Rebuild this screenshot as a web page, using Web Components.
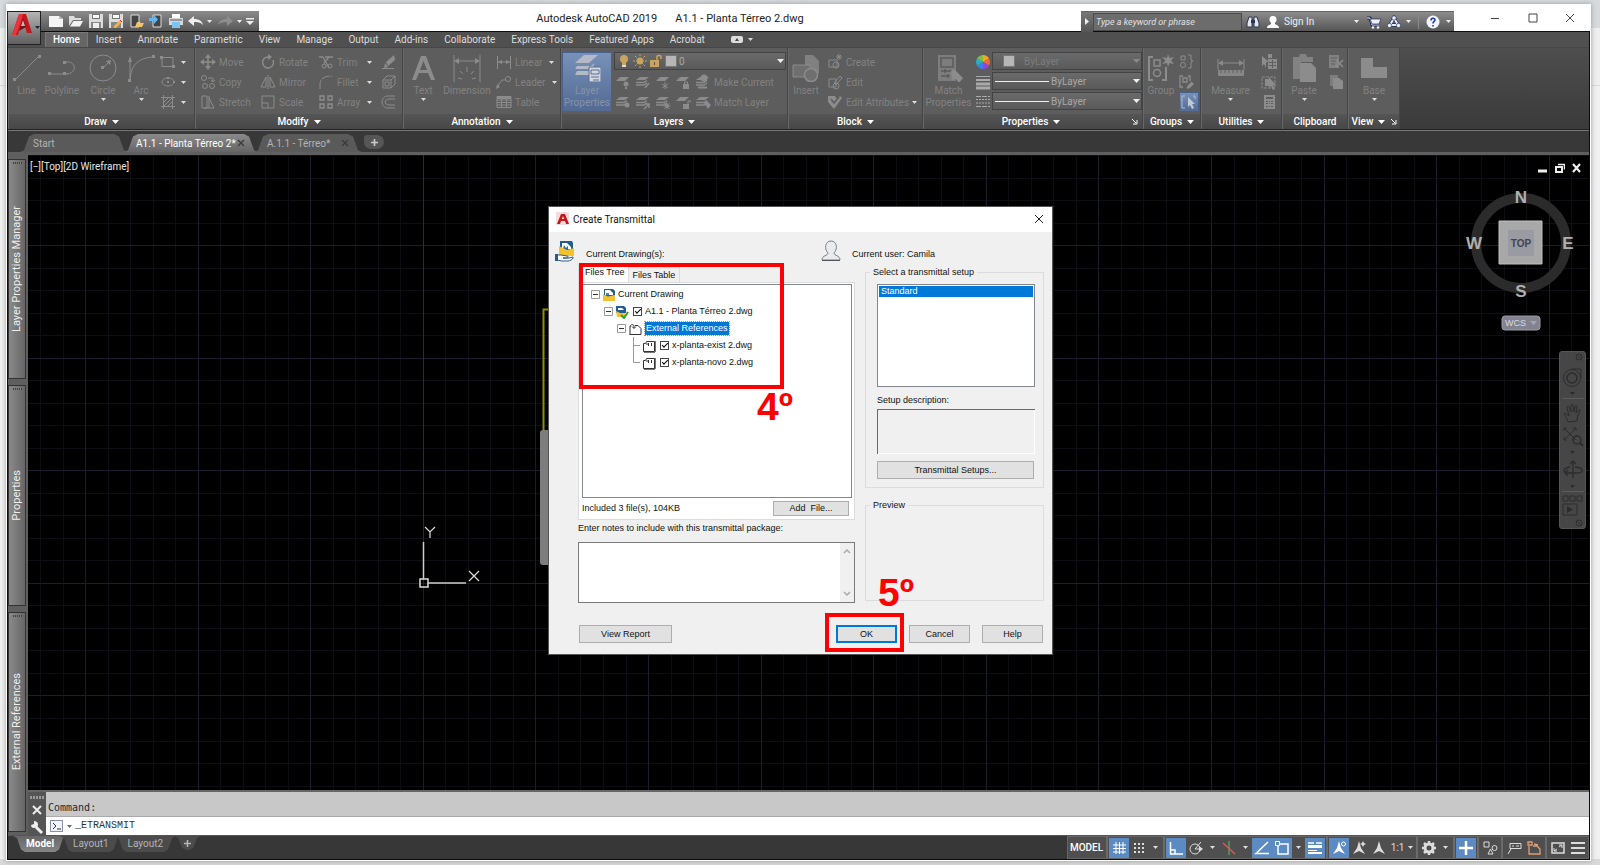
<!DOCTYPE html>
<html lang="en">
<head>
<meta charset="utf-8">
<title>Autodesk AutoCAD 2019 - A1.1 - Planta Térreo 2.dwg</title>
<style>
html,body{height:100%}
body{margin:0;padding:4px 9px 5px 6px;box-sizing:border-box;font-family:Roboto,"Open Sans",sans-serif;font-size:10px;
background:linear-gradient(#d6dadd 0 28px,#efefef 28px 85px,#d9d9d9 85px 86px,#f0f0f0 86px calc(100% - 6px),#d9d9d9 calc(100% - 6px))}
</style>
</head>
<body>
<cad-window></cad-window>
<script>
const s = (d, extra = '') => `<path d="${d}" fill="none" stroke="currentColor" ${extra}/>`;
const f = (d, extra = '') => `<path d="${d}" fill="currentColor" ${extra}/>`;
const layers = f('M5 3h9l-4 3H1z') + s('M1 8.500h8l3-2M1 11h8l3-2', 'stroke-width="1.500"');
const oneLayer = f('M5 3h9l-4 4H1z');
const annoA = f('M8 1l2 7 4 6-6-3-6 3 4-6z');
/* name: [width, height, markup] */
const ICONS = {
  arrow: [7, 4, f('M0 0h7L3.500 4z')],
  arrowsm: [5, 3, f('M0 0h5L2.500 3z')],
  launcher: [7, 7, s('M1 1l4 4M6 2v4H2')],
  logo: [22, 24, `<path d="M1 23L8 2h7l6 19h-5l-2-6H9l-2 8z" fill="#c4161c"/><path d="M8 2h4l-2 8-5 13H1z" fill="#e8343a"/><path d="M9 15l3-9 3 9-7 4z" fill="#7d1015"/><path d="M10 14l2-6 2 6z" fill="#bbb"/>`],
  logosm: [14, 14, `<path fill="#f6dcdc" d="M0 0h13v13H0z"/><path d="M1 12L5 2h4l4 10h-3l-1-3H5l-1 3z" fill="#c4161c"/><path d="M6 7l1-3 1 3z" fill="#fff"/>`],
  new: [16, 14, `<path fill="#f4f4f4" d="M1 2h10l4 3v8H1z"/><path fill="#bbb" d="M11 2v3h4z"/>`],
  open: [16, 14, `<path fill="#ddd" d="M1 12V2h5l1 2h6v2H5z"/><path fill="#f2f2f2" d="M2 12.500L5.500 7H15l-3 5.500z"/>`],
  save: [16, 14, `<path fill="#dcdcdc" d="M1 0h14v14H1z"/><path fill="#777" d="M4 0h8v5H4z"/><path fill="#fff" d="M5 1h6v3H5z"/><path fill="#888" d="M3 8h10v6H3z"/><path fill="#eee" d="M5 9h6v5H5z"/>`],
  saveas: [16, 14, `<path fill="#dcdcdc" d="M1 0h14v14H1z"/><path fill="#777" d="M4 0h8v5H4z"/><path fill="#fff" d="M5 1h6v3H5z"/><path fill="#888" d="M3 8h10v6H3z"/><path d="M6 12l6-6 2 2-6 6H6z" fill="#f0b44a"/><path d="M12 6l2 2" stroke="#d33"/>`],
  webopen: [16, 14, `<path d="M3 1h8v12H3z" fill="#444" stroke="#ddd"/><path fill="#f0c46a" d="M7 13l2-5h3l1 1h3l-2 4z"/>`],
  websave: [16, 14, `<path d="M5 1h8v12H5z" fill="#444" stroke="#ddd"/><path fill="#63b7f0" d="M1 4h5V1l4 4.500L6 10V7H1z"/>`],
  print: [16, 14, `<path fill="#fff" d="M4 0h8v4H4z"/><path fill="#d8d8d8" d="M1 4h14v7H1z"/><path fill="#7cc4f5" d="M4 8h8v6H4z"/><path stroke="#555" d="M2 6h12"/>`],
  undo: [15, 12, `<path fill="currentColor" d="M0 6l6-5v3c5 0 8 2 9 6-3-3-5-3-9-3v4z"/>`],
  redo: [15, 12, `<path fill="currentColor" d="M15 6L9 1v3C4 4 1 6 0 10c3-3 5-3 9-3v4z"/>`],
  custom: [8, 7, f('M0 0h8v1.500H0zM0 3h8L4 7z')],
  play: [5, 7, f('M0 0l4 3.500L0 7z')],
  binoc: [14, 14, `<path fill="#e4e8ee" stroke="#2b3350" d="M3 2h3v10H1V8zM11 2H8v10h5V8z"/><path fill="#2b3350" d="M5 5h4v3H5z"/>`],
  user: [14, 14, `<circle cx="7" cy="4.500" r="3.500" fill="#fff"/><path fill="#fff" d="M1 13c0-3 3-3 4-4V7h4v2c1 1 4 1 4 4z"/>`],
  cart: [14, 14, `<path fill="none" stroke="#1c2850" stroke-width="3" d="M0 3h3l2 7h7"/><path fill="none" stroke="#eef" d="M0 3h3l2 7h7"/><path fill="#eef" stroke="#1c2850" stroke-width=".7" d="M3 4h11l-2 5H5z"/><circle cx="6" cy="12.500" r="1.300" fill="#eef"/><circle cx="11" cy="12.500" r="1.300" fill="#eef"/>`],
  a360: [14, 14, `<path fill="none" stroke="#26335c" stroke-width="3.500" d="M7 3l4 7H3z"/><path fill="none" stroke="#eef" stroke-width="2" d="M7 3l4 7H3z"/><g fill="#eef" stroke="#26335c" stroke-width=".7"><circle cx="7" cy="3" r="2.200"/><circle cx="2.500" cy="10.500" r="2.200"/><circle cx="11.500" cy="10.500" r="2.200"/></g>`],
  help: [14, 14, `<circle cx="7" cy="7" r="6.500" fill="#f2f4fa"/><path d="M5 5.500c0-3 4-3 4-.5C9 6.500 7 6.500 7 8.500M7 10v1.500" fill="none" stroke="#1f3f9c" stroke-width="1.600"/>`],
  min: [10, 10, s('M1 5.500h8')], max: [10, 10, s('M1 1h8v8H1z')], close: [10, 10, s('M1 1l8 8M9 1l-8 8')], closeb: [10, 10, s('M1 1l8 8M9 1l-8 8', 'stroke-width="2"')],
  ribbonmin: [12, 8, `<rect width="12" height="7" rx="2" fill="#ddd"/><path d="M4 5h4L6 2z" fill="#444"/>`],
  line: [28, 28, s('M2 26L26 2') + f('M0 24h3v3H0zM25 1h3v3h-3z')],
  polyline: [28, 28, s('M2 20h15M18 8c11-1 11 12 0 12') + f('M0 18h3v3H0zM15 18h3v3h-3zM15 7h3v3h-3z')],
  circle: [28, 28, `<circle cx="14" cy="14" r="13" fill="none" stroke="currentColor"/>` + s('M14 14l6-6') + f('M12 12h3v3h-3zM17 7l5-1-1 5z')],
  arc: [28, 28, s('M3 26V6M3 26C4 10 12 4 26 3') + f('M1 8l2-6 2 6zM1 25h3v3H1zM25 1h3v3h-3z')],
  rect: [16, 16, s('M2 3.500h11v9H2z') + f('M0 2h3v3H0zM12 11h3v3h-3z')],
  ellipse: [16, 16, `<ellipse cx="8" cy="8" rx="6" ry="4" fill="none" stroke="currentColor"/>` + f('M7 3h2v2H7zM7 7h2v2H7zM13 7h2v2h-2z')],
  hatch: [16, 16, s('M3.500 1v14M12.500 1v14M1 3.500h14M1 12.500h14M4 8l4-4M4 12l8-8M8 12l4-4')],
  move: [16, 16, s('M8 2v12M2 8h12', 'stroke-width="1.500"') + f('M8 0l3 4H5zM8 16l3-4H5zM0 8l4-3v6zM16 8l-4-3v6z')],
  copy: [16, 16, `<g fill="none" stroke="currentColor"><circle cx="4" cy="4" r="2.500"/><circle cx="5" cy="12" r="2.500"/><circle cx="12" cy="12" r="2.500"/><path d="M8 4h5v4M11 6l2 2 2-2"/></g>`],
  stretch: [16, 16, s('M2 2h5v12H2zM9 2v12M9 4l5 10H4')],
  rotate: [16, 16, s('M9 3a5.500 5.500 0 1 0 4 3', 'stroke-width="1.500"') + f('M8 0v6l4-3z')],
  mirror: [16, 16, s('M6 3v10H1zM10 3v10h5zM8 1v14')],
  scale: [16, 16, s('M2 2h12v12H2zM2 9h6v5')],
  trim: [16, 16, s('M1 3h4M7 3h8M5 3l6 11M11 3L6 9', 'stroke-width="1.300"') + `<circle cx="6" cy="12" r="2" fill="none" stroke="currentColor"/><circle cx="12" cy="12" r="2" fill="none" stroke="currentColor"/>`],
  fillet: [16, 16, s('M2 15V10C2 5 6 2 14 2', 'stroke-dasharray="9 1"')],
  array: [16, 16, s('M2 2h4v4H2zM10 2h4v4h-4zM2 10h4v4H2zM10 10h4v4h-4z', 'stroke-width="1.400"')],
  erase: [16, 16, f('M5 8l8-7 1 5-7 6zM4 9l3 4-4 1z') + s('M1 14.500h12')],
  explode: [16, 16, s('M2 6h8v8H2zM2 6l4-4h8v8l-4 4M10 6l4-4M4 8h4v4H4z')],
  offset: [16, 16, s('M14 2H7C-1 2-1 14 7 14h7M14 5H8C3 5 3 11 8 11h6')],
  text: [28, 28, f('M3 26L12 2h5l9 24h-4l-3-7H10l-3 7zM11 16h7L14.500 7z', 'fill-rule="evenodd"')],
  dim: [28, 28, s('M1 1v27M27 1v27M2 7h24M14 13v5M7 17l3 3M21 17l-3 3M5 24l4 1M23 24l-4 1') + f('M1 7l5-3v6zM27 7l-5-3v6z')],
  linear: [16, 16, s('M1.500 2v13M14.500 2v13M2 8h12') + f('M2 8l4-2v4zM14 8l-4-2v4z')],
  leader: [16, 16, s('M1 13l5-7h4') + `<circle cx="12" cy="5" r="2.500" fill="none" stroke="currentColor"/>` + f('M0 15l1-5 3 3z')],
  table: [16, 16, s('M1 2.500h14v11H1zM1 6h14M1 8.500h14M1 11h14M5.500 5v9M10.500 5v9') + f('M1 2h14v3H1z')],
  layerprops: [28, 28, `<path fill="#b3bac5" d="M11 1h14l-9 8H2zM4 12h14l3-3-1 6H2zM4 17h12v4H2z"/><path fill="#d3d8e0" stroke="#5a6d91" d="M16 13h12v15H16z"/><path stroke="#5a6d91" fill="none" d="M18 16h8v4h-8zM18 23h8M20 26h6"/>`],
  bulb: [14, 14, `<circle cx="7" cy="5" r="4" fill="#c9a45e"/><path fill="#c9a45e" d="M5 8h4v3H5z"/><path fill="#ddd" d="M5 11h4v2H5z"/>`],
  sun: [14, 14, `<circle cx="7" cy="7" r="3.500" fill="#c9a45e"/><path stroke="#c9a45e" d="M7 0v2M7 12v2M0 7h2M12 7h2M2 2l1.500 1.500M12 2l-1.500 1.500M2 12l1.500-1.500M12 12l-1.500-1.500"/>`],
  lock: [14, 14, `<path fill="#c9a45e" d="M1 6h9v7H1z"/><path fill="none" stroke="#c9a45e" stroke-width="1.500" d="M8 6V3c0-2 4-2 4 0v2"/><path fill="#555" d="M5 8h1v3H5z"/>`],
  ly1: [16, 16, oneLayer + `<circle cx="11" cy="10" r="2.500" fill="currentColor"/>` + f('M10 13h2v2h-2z')],
  ly2: [16, 16, layers + s('M10 14l4-5', 'stroke-width="1.500"')],
  ly3: [16, 16, oneLayer + s('M10 8v7M7 10l6 4M13 10l-6 4')],
  ly4: [16, 16, oneLayer + f('M8 10h6v5H8z') + s('M9.500 10V8h3v2')],
  ly5: [16, 16, layers + `<circle cx="9" cy="4" r="3.500" fill="currentColor"/>` + s('M3 13.500h9', 'stroke-width="2"')],
  ly6: [16, 16, layers + `<circle cx="12" cy="11" r="2.500" fill="currentColor"/>`],
  ly7: [16, 16, layers + s('M9 15l5-5M14 14v-4h-4', 'stroke-width="1.500"')],
  ly8: [16, 16, layers + `<circle cx="12" cy="12" r="2" fill="currentColor"/>` + s('M12 8v8M8 12h8M9 9l6 6M15 9l-6 6', 'stroke-width=".7"')],
  ly9: [16, 16, oneLayer + f('M8 10h6v5H8z') + s('M13 10V7h3v2')],
  ly10: [16, 16, layers + f('M9 9l3-2 4 4-3 4z')],
  insert: [28, 28, f('M13 1h8l6 6v12H13z', 'opacity=".75"') + `<path d="M1 11h17v12H1z" fill="#6f6f6f" stroke="currentColor"/><circle cx="19" cy="21" r="6.500" fill="#6f6f6f" stroke="currentColor" stroke-width="1.500"/>`],
  bcreate: [16, 16, s('M2 6h8v7H2zM9 3h6M12 0v6M10 1l4 4M14 1l-4 4') + `<circle cx="9" cy="11" r="3" fill="none" stroke="currentColor"/>`],
  bedit: [16, 16, s('M2 5h7v8H2zM7 9l6-7 2 2-6 7z') + `<circle cx="9" cy="12" r="3" fill="none" stroke="currentColor"/>`],
  battr: [16, 16, f('M1 2h7l2 3 3-3 2 2-8 11L1 8z') + `<path d="M4 5l3 4 5-6" stroke="#5e5e5e" fill="none" stroke-width="1.500"/>`],
  match: [28, 28, f('M3 1h18v26H3z', 'opacity=".7"') + `<path d="M6 4h12v9H6zM6 17h12M6 22h9M10 15v4M13 20v4" fill="none" stroke="#5b5b5b" stroke-width="1.500"/>` + f('M16 17l3-2 9 9-4 5-3-4-4 1z')],
  wheel: [16, 16, `<path fill="#f5a623" d="M8 8V1a7 7 0 0 1 6 3.500z"/><path fill="#f0683a" d="M8 8l6-3.500a7 7 0 0 1 0 7z"/><path fill="#8e44ec" d="M8 8l6 3.500A7 7 0 0 1 8 15z"/><path fill="#3f7fe8" d="M8 8v7a7 7 0 0 1-6-3.500z"/><path fill="#25b0c5" d="M8 8l-6 3.500a7 7 0 0 1 0-7z"/><path fill="#77c043" d="M8 8L2 4.500A7 7 0 0 1 8 1z"/>`],
  weights: [16, 16, `<path stroke="#aaa" d="M1 2.500h14"/><path stroke="#aaa" stroke-width="2" d="M1 6h14"/><path stroke="#aaa" stroke-width="3" d="M1 10h14M1 14h14"/>`],
  types: [16, 16, `<path stroke="#aaa" stroke-dasharray="5 1" d="M1 2.500h14M1 12.500h14"/><path stroke="#aaa" stroke-dasharray="2 1" d="M1 5.500h14M1 9h14"/>`],
  group: [28, 28, s('M6 3H2v23h4M15 26h4V13', 'stroke-width="2"') + s('M7 6h6v6H7z', 'stroke-width="1.500"') + `<circle cx="10" cy="19" r="3.500" fill="none" stroke="currentColor" stroke-width="1.500"/>` + f('M21 0l1.500 4L27 3l-3 3.500 3 3.500-4.500-1L21 13l-1-4-5 1 3.500-3.500L15 3l5 1z')],
  g2: [16, 16, s('M2 2h4v4H2zM9 1h3v5l2 1-2 1v6H9') + `<circle cx="4" cy="11" r="2.500" fill="none" stroke="currentColor"/>`],
  g3: [16, 16, s('M4 2H1v11h3M9 2h2v5M4 4h4v4H4zM8 14l5-6', 'stroke-width="1.300"') + f('M8 15l1-4 4-3 2 2-4 4z')],
  g4: [16, 16, `<path fill="none" stroke="#aebbd2" d="M4 2H1v12h3M12 2h2v3"/><path fill="#bfc9da" d="M7 3v10l2-2 2 4 2-1-2-4h3z"/>`],
  measure: [28, 28, s('M1 5v11M27 5v11M2 9h24') + f('M1 9l5-3v6zM27 9l-5-3v6zM1 16h26v6H1z', 'opacity=".9"') + `<path d="M4 16v3M8 16v3M12 16v3M16 16v3M20 16v3M24 16v3" stroke="#5e5e5e"/>`],
  u1: [16, 16, f('M7 5h9v10H7zM1 2v10l2-2 2 4V8h3zM7 0h4v4H7z') + `<path stroke="#5e5e5e" d="M8 8.500h7M8 11.500h7M11.500 6v8"/>`],
  u2: [16, 16, s('M1 3h13v11H1z', 'stroke-dasharray="3 1"') + f('M4 5h4v7H4zM8 3v11l2-2 2 4 2-1-2-4h3z')],
  u3: [16, 16, f('M3 1h11v14H3z') + `<path fill="#5e5e5e" d="M5 3h7v2H5zM5 7h2v1H5zM8 7h1v1H8zM10 7h2v1h-2zM5 9h2v1H5zM8 9h1v1H8zM10 9h2v1h-2zM5 12h2v1H5zM8 12h1v1H8zM10 12h2v1h-2z"/>`],
  paste: [28, 28, f('M3 3h6l1-3h6l1 3h6v5H11v17H3z', 'opacity=".8"') + f('M10 9h11l5 5v14H10z')],
  c1: [16, 16, f('M1 1h10v13H1z', 'opacity=".8"') + `<path d="M3 4h6M3 7h6M3 10h4" stroke="#5e5e5e"/>` + s('M8 6l7 7M15 6l-7 7', 'stroke-width="1.500"')],
  c2: [16, 16, f('M2 1h8v11H2z', 'opacity=".7"') + f('M5 4h6l4 3v8H5z')],
  base: [28, 28, f('M1 4h12v9h14v11H1z')],
  plus: [9, 9, s('M4.500 1v7M1 4.500h7', 'stroke-width="1.600"')],
  tabx: [8, 8, s('M1 1l6 6M7 1L1 7', 'stroke-width="1.300"')],
  vmin: [10, 10, s('M0 8h9', 'stroke-width="3"')],
  vrest: [10, 10, s('M1 4h6v5H1z', 'stroke-width="2"') + s('M3 1.500h6.500v5', 'stroke-width="1.500"')],
  vclose: [10, 10, s('M1 1l7 8M8 1l-7 8', 'stroke-width="2.200"')],
  wrench: [14, 14, s('M6 6l6 6', 'stroke-width="3"') + f('M1 4l3-1V0c4 0 5 4 3 6-3 2-6 1-6-2z')],
  prompt: [14, 14, `<rect x=".5" y="1.500" width="12" height="11" fill="#f1f3fa" stroke="#8a90a8"/><path d="M3 4l3 3-3 3M7 10h4" fill="none" stroke="#333"/>`],
  folder: [20, 22, `<path fill="#1f5e8e" d="M5 1h12l1 2v10H5z"/><path fill="#fff" d="M7 3h5l4 4v2H7z"/><path fill="#2b6ea5" d="M9 5l2 3 2-2v3H8z"/><path fill="#f2c230" d="M4 6l8 4 7-2v8H4z"/><path fill="#fff" stroke="#2b5c88" d="M2 15h4l6 1c2 0 1 2 0 2H8h6l4-1c1 1-2 4-5 4H7l-5-1z"/><path fill="#2b5c88" d="M0 14h3v7H0z"/>`],
  person: [20, 22, `<path fill="#e8ebf0" stroke="#7b8088" d="M1 20c0-5 6-4 6-7C3 9 4 1 10 1s7 8 3 12c0 3 6 2 6 7z"/><path stroke="#555" d="M1 20.500h18"/>`],
  tdraw: [14, 14, `<path fill="#235d92" d="M2 1h9l2 2v6H2z"/><path fill="#fff" d="M3 2h5l3 3v2H3z"/><path fill="#4a86b8" d="M4 5h3v2H4z"/><path fill="#f2c230" d="M1 6l5 2.500 7-1.500v6H1z"/>`],
  tdrawok: [14, 14, `<path fill="#235d92" d="M1 1h8l2 2v5H1z"/><path fill="#fff" d="M3 3h4l2 2H3z"/><path fill="#f2c230" d="M1 6l4 2h5v4H2z"/><path fill="none" stroke="#2fa12f" stroke-width="2" d="M6 10l3 3 4-6"/>`],
  txref: [14, 14, `<path fill="#fff" stroke="#333" d="M2 12.500V4.500M2 5c0-3 4-3 4-1v2M4 4.500l2 2 2-2M7 3.500h3l3 3v6H1.500"/>`],
  tfile: [14, 14, `<path fill="#fff" stroke="#333" d="M1.500 12.500v-8h2l1-2h8v10z"/><path d="M9.500 4v3M4 5h2M6.500 4v3" stroke="#333" fill="none"/><path stroke="#777" d="M2 13.500h11M13.500 2v11"/>`],
  box: [9, 9, `<path fill="#fff" stroke="#999" d="M.5.500h8v8h-8z"/><path stroke="#333" d="M2 4.500h5"/>`],
  elbow: [7, 17, `<path fill="none" stroke="#999" d="M.5 0v8.500H7"/>`],
  tee: [7, 17, `<path fill="none" stroke="#999" d="M.5 0v17M0 8.500h7"/>`],
  up: [8, 6, s('M1 5l3-3 3 3', 'stroke-width="1.500"')], down: [8, 6, s('M1 1l3 3 3-3', 'stroke-width="1.500"')],
  s1: [16, 16, s('M5 2v12M8.500 2v12M12 2v12M2 5h13M2 8.500h13M2 12h13')],
  s2: [16, 16, f('M3 3h2v2H3zM7 3h2v2H7zM11 3h2v2h-2zM3 7h2v2H3zM7 7h2v2H7zM11 7h2v2h-2zM3 11h2v2H3zM7 11h2v2H7zM11 11h2v2h-2z')],
  s3: [16, 16, s('M2.500 2v12H15M3 10h4v4', 'stroke-width="1.500"')],
  s4: [16, 16, `<circle cx="7" cy="9" r="5" fill="none" stroke="currentColor"/>` + s('M7 9h7M7 9l6-7') + f('M11 6l4 3-4 3z')],
  s5: [16, 16, `<path d="M8 1v14" stroke="#5cc06a"/><path d="M2 3l12 11" stroke="#e05a5a" stroke-width="1.300"/>`],
  s6: [16, 16, s('M14 2L2 13.500h13', 'stroke-width="1.500"')],
  s7: [16, 16, s('M4 4h10v10H4z', 'stroke-width="1.500"') + `<path d="M1.500 1.500h4v4h-4z" fill="#5b8bc2" stroke="#fff"/>`],
  s8: [16, 16, s('M1 3h6M9 3h6', 'stroke-width="1.500"') + f('M1 5h14v3H1zM1 10h9v1H1zM1 12h14v2H1z')],
  s9: [16, 16, annoA + `<circle cx="12.500" cy="4" r="2" fill="none" stroke="currentColor"/>`],
  s10: [16, 16, annoA + f('M12 1l1 2 2 1-2 1-1 2-1-2-2-1 2-1z')],
  s11: [16, 16, annoA],
  gear: [16, 16, `<circle cx="8" cy="8" r="4" fill="none" stroke="currentColor" stroke-width="3"/><path stroke="currentColor" stroke-width="2.500" d="M8 1v3M8 12v3M1 8h3M12 8h3M3 3l2 2M11 11l2 2M13 3l-2 2M5 11l-2 2"/><circle cx="8" cy="8" r="2" fill="#4f4f4f"/>`],
  s12: [16, 16, s('M8 1v14M1 8h14', 'stroke-width="2.500"')],
  s13: [16, 16, s('M2 2h5v5H2zM6 14l2.500-5 2.500 5z') + `<circle cx="12.500" cy="8" r="2.500" fill="none" stroke="currentColor"/>`],
  s14: [16, 16, s('M4 3.500h11v5H4zM6 6h2M10 6h3M2 14l3-5')],
  s15: [16, 16, `<path fill="none" stroke="#d9a07a" stroke-width="1.300" d="M2 2h4v3H2zM3 6v8h11V9l-3-3H7M8 4l4 1"/>`],
  s16: [16, 16, s('M2 3h12v10H2z', 'stroke-width="1.500"') + s('M4 11l3-2M12 5L9 7M4 8v3h3M12 8V5H9')],
  s17: [16, 16, s('M1 3h14M1 8h14M1 13h14', 'stroke-width="2"')],
  n0: [8, 8, `<circle cx="4" cy="4" r="3" fill="none" stroke="currentColor"/>` + s('M2.500 2.500l3 3')],
  n1: [22, 22, `<circle cx="10" cy="12" r="8.500" fill="none" stroke="currentColor"/><circle cx="10" cy="12" r="5" fill="none" stroke="currentColor" stroke-width="1.500"/>` + s('M10 3h9v9')],
  n2: [22, 22, s('M6 20C5 15 1 13 3 11l4 3L5 5c1-2 2 0 2 0l2 5V3c1-2 2 0 2 0l1 7 1-6c1-1 2 0 2 0l-1 7 3-3c2-1 1 1 1 1-2 5-3 5-3 10z')],
  n3: [22, 22, s('M2 2l12 12M14 2L2 14M2 5V2h3M11 2h3v3M2 11v3h3') + `<circle cx="15" cy="14" r="4" fill="none" stroke="currentColor" stroke-width="1.500"/>` + s('M18 17l3 3', 'stroke-width="2"')],
  n4: [22, 22, s('M11 3v16M8 5l3-3 3 3M13 8c10 1 10 6 0 6H6c-7-1-4-5 2-6M6 17l-3-3 3-3', 'stroke-width="1.300"')],
  n5: [22, 22, s('M1 1h5v5H1zM8 1h5v5H8zM15 1h5v5h-5zM1 9h14v11H1z') + f('M5 11l6 3.500L5 18z')]
};
const build = (host, css, html) => {
  const root = host.attachShadow({ mode: 'open' });
  root.innerHTML = `<style>*{box-sizing:border-box}button,input,select,textarea{font:inherit;color:inherit;margin:0;padding:0;border:0;background:none;border-radius:0}button{text-align:center;white-space:nowrap}select{appearance:none}${css}</style>${html}`;
};
const element = (name, css, html) => customElements.define(name, class extends HTMLElement {
  connectedCallback() {
    if (!this.shadowRoot) build(this, css, typeof html === 'function' ? html(n => this.getAttribute(n) || '', n => this.hasAttribute(n)) : html);
  }
});
const ic = n => `<cad-icon name="${n}"></cad-icon>`;

element('cad-icon', ':host{display:inline-flex;flex:none}svg{display:block}', a => {
  const [w, h, body] = ICONS[a('name')];
  return `<svg width="${w}" height="${h}" viewBox="0 0 ${w} ${h}" aria-hidden="true">${body}</svg>`;
});

/* Large ribbon command: picture over caption */
element('big-tool', `:host{display:block;flex:none;width:var(--w,40px)}
button{width:100%;height:60px;display:flex;flex-direction:column;align-items:center;padding-top:2px;color:#828282}
.cap{line-height:12px;margin-top:3px}.cap+cad-icon{color:#ddd;margin-top:1px}cad-icon:first-child{color:#8c8c8c}
:host([on]) button{background:linear-gradient(#7791b8,#536a93);border:1px solid #48618c;color:#8492a9;padding-top:1px}`,
(a, h) => `<button type="button" ${h('on') ? '' : 'disabled'}>${ic(a('icon'))}<span class="cap">${a('label').replace('|', '<br>')}</span>${h('menu') ? ic('arrowsm') : ''}</button>`);

/* Small ribbon command: picture beside caption */
element('small-tool', `:host{display:block}
button{height:20px;min-width:16px;display:flex;align-items:center;gap:3px;color:#828282;width:100%}
cad-icon{color:#8c8c8c}.m{color:#ddd;margin-left:auto}:host([near]) .m{margin-left:4px}
:host([on]) button{background:linear-gradient(#7791b8,#536a93);border:1px solid #48618c;padding-left:1px}`,
(a, h) => `<button type="button" ${h('on') ? '' : 'disabled'} aria-label="${a('label') || a('icon')}">${ic(a('icon'))}${a('label') ? `<span>${a('label')}</span>` : ''}${h('menu') ? `<cad-icon class="m" name="arrowsm"></cad-icon>` : ''}</button>`);

element('ribbon-panel', `:host{display:flex;flex-direction:column;flex:none;width:var(--w);border-right:1px solid #454545;border-left:1px solid #686868;background:#5d5d5d}
.body{height:66px;padding-top:4px;display:flex;align-items:flex-start}
footer{height:15px;background:linear-gradient(#555,#474747);color:#fff;display:flex;align-items:center;justify-content:center;gap:5px;font-weight:500}
:host([launch]) footer{padding-right:4px}i{flex:1}i:last-of-type{text-align:right}`,
(a, h) => `<div class="body"><slot></slot></div><footer>${h('launch') ? '<i></i>' : ''}<span>${a('label')}</span>${h('plain') ? '' : ic('arrow')}${h('launch') ? `<i>${ic('launcher')}</i>` : ''}</footer>`);

element('ribbon-combo', `:host{display:flex;height:18px;align-items:center;border:1px solid #434343;background:linear-gradient(#6a6a6a,#5a5a5a);padding:0 1px 0 2px;gap:2px;color:#a8a8a8}
select{flex:1;min-width:0;height:16px;opacity:1}cad-icon{color:#eee}:host([off]){color:#7d7d7d}:host([off]) cad-icon{color:#8a8a8a}`,
a => `<slot></slot><select aria-label="${a('label')}"><option>${a('value')}</option></select>${ic('arrow')}`);

element('title-bar', `:host{display:flex;height:27px;padding:7px 1px 0;background:#fff;position:relative;color:#222}
.app{position:absolute;left:1px;top:7px;width:34px;height:34px;z-index:2;border:1px solid #222;background:linear-gradient(#b4b4b4,#5f5f5f);display:flex;align-items:center;gap:2px;padding:0 2px 8px 3px;color:#1c2438}
.app cad-icon+cad-icon{margin-top:6px}
.qat{margin-left:34px;width:218px;flex:none;display:flex;align-items:center;gap:4px;padding-left:7px;background:linear-gradient(#8c8c8c,#565656);color:#eee}
.qat button{display:flex}.qat .dim{color:#8e8e8e;display:flex;margin-left:2px}
h1{flex:1;margin:-6px 0 0;font-size:11px;font-weight:400;display:flex;gap:18px;align-items:center;justify-content:center;white-space:nowrap}
.info{flex:none;width:373px;display:flex;align-items:center;background:linear-gradient(#8c8c8c,#565656);color:#eee;border-top:1px solid #666}
.info button{display:flex;align-items:center}.go{width:12px;height:20px;justify-content:center;background:linear-gradient(#777,#555)}
input{width:149px;height:18px;border:1px solid #4a4a4a;background:#6c6c6c;padding:0 2px;font-size:9px;font-style:italic;color:#e0e0e0}
input::placeholder{color:#e0e0e0;opacity:1}
.sign{gap:4px;margin-left:6px}.sign span{margin-right:36px}.sep{width:1px;height:14px;background:#888;margin:0 7px}
.win{flex:none;width:136px;margin-top:-7px;display:flex;justify-content:space-between;align-items:center;padding:0 15px 0 36px;color:#444}.win button{display:flex}`,
`<button class="app" type="button" aria-label="Application menu">${ic('logo')}${ic('arrowsm')}</button>
<div class="qat">${['new', 'open', 'save', 'saveas', 'webopen', 'websave', 'print', 'undo'].map(n => `<button type="button" aria-label="${n}">${ic(n)}</button>`).join('')}${ic('arrowsm')}<span class="dim">${ic('redo')}</span>${ic('arrowsm')}${ic('custom')}</div>
<h1><span>Autodesk AutoCAD 2019</span><span>A1.1 - Planta Térreo 2.dwg</span></h1>
<div class="info"><button class="go" type="button" aria-label="Show search">${ic('play')}</button><input type="text" aria-label="Search" placeholder="Type a keyword or phrase">
<button type="button" aria-label="Find" style="margin-left:4px">${ic('binoc')}</button><button class="sign" type="button">${ic('user')}<span>Sign In</span>${ic('arrowsm')}</button>
<button type="button" aria-label="Store" style="margin-left:8px">${ic('cart')}</button><button type="button" aria-label="Apps" style="margin-left:6px;gap:5px">${ic('a360')}${ic('arrowsm')}</button><span class="sep"></span><button type="button" aria-label="Help" style="gap:6px">${ic('help')}${ic('arrowsm')}</button></div>
<div class="win"><button type="button" aria-label="Minimize">${ic('min')}</button><button type="button" aria-label="Maximize">${ic('max')}</button><button type="button" aria-label="Close">${ic('close')}</button></div>`);

element('ribbon-tabs', `:host{display:flex;height:16px;align-items:flex-end;background:#505050;padding-left:37px;color:#dcdcdc;border-bottom:1px solid #464646}
button{height:15px;padding:0 8px;line-height:15px}button[aria-selected=true]{background:#666;color:#fff;border:1px solid #787878;border-bottom:0;font-weight:500;padding:0 7px;line-height:14px}
.x{display:flex;align-items:center;gap:5px;padding-left:18px}`,
['Home', 'Insert', 'Annotate', 'Parametric', 'View', 'Manage', 'Output', 'Add-ins', 'Collaborate', 'Express Tools', 'Featured Apps', 'Acrobat'].map((t, i) => `<button type="button" role="tab" aria-selected="${!i}">${t}</button>`).join('') + `<button class="x" type="button" aria-label="Minimize ribbon">${ic('ribbonmin')}${ic('arrowsm')}</button>`);

const st = (icon, label = '', extra = '') => `<small-tool icon="${icon}" label="${label}" ${extra}></small-tool>`;
const bt = (icon, label, w, extra = '') => `<big-tool icon="${icon}" label="${label}" style="--w:${w}px" ${extra}></big-tool>`;
const panel = (label, w, body, extra = '') => `<ribbon-panel label="${label}" style="--w:${w}px" ${extra}>${body}</ribbon-panel>`;
const col = (w, ml, body) => `<div class="col" style="width:${w}px;margin-left:${ml}px">${body}</div>`;
element('cad-ribbon', `:host{display:flex;height:83px;background:linear-gradient(#4e4e4e,#3a3a3a);border-bottom:1px solid #777;box-shadow:inset 0 -1px #222;padding-bottom:1px}
.col{flex:none}.row{display:flex;gap:4px;padding-left:1px}ribbon-combo{margin-bottom:2px}.sw{width:12px;height:12px;background:#b6b6b6;border:1px solid #777}.ln{width:54px;height:1px;background:#eee}`,
panel('Draw', 187, bt('line', 'Line', 35) + bt('polyline', 'Polyline', 36) + bt('circle', 'Circle', 46, 'menu') + bt('arc', 'Arc', 30, 'menu') + col(26, 4, st('rect', '', 'menu') + st('ellipse', '', 'menu') + st('hatch', '', 'menu'))) +
panel('Modify', 208, col(57, 4, st('move', 'Move') + st('copy', 'Copy') + st('stretch', 'Stretch')) + col(55, 3, st('rotate', 'Rotate') + st('mirror', 'Mirror') + st('scale', 'Scale')) + col(54, 3, st('trim', 'Trim', 'menu') + st('fillet', 'Fillet', 'menu') + st('array', 'Array', 'menu')) + col(16, 9, st('erase') + st('explode') + st('offset'))) +
panel('Annotation', 158, bt('text', 'Text', 38, 'menu') + bt('dim', 'Dimension', 50) + col(60, 4, st('linear', 'Linear', 'menu near') + st('leader', 'Leader', 'menu near') + st('table', 'Table'))) +
panel('Layers', 227, bt('layerprops', 'Layer|Properties', 50, 'on') + col(172, 2,
  `<ribbon-combo label="Layer" value="0">${ic('bulb')}${ic('sun')}${ic('lock')}<span class="sw"></span></ribbon-combo><div class="row">${st('ly1')}${st('ly2')}${st('ly3')}${st('ly4')}${st('ly5', 'Make Current')}</div><div class="row">${st('ly6')}${st('ly7')}${st('ly8')}${st('ly9')}${st('ly10', 'Match Layer')}</div>`)) +
panel('Block', 135, bt('insert', 'Insert', 34) + col(90, 4, st('bcreate', 'Create') + st('bedit', 'Edit') + st('battr', 'Edit Attributes', 'menu'))) +
panel('Properties', 220, bt('match', 'Match|Properties', 49) + col(16, 2, st('wheel') + st('weights') + st('types')) + col(150, 1,
  `<ribbon-combo off label="Color" value="ByLayer"><span class="sw" style="margin:0 7px 0 8px"></span></ribbon-combo><ribbon-combo label="Lineweight" value="ByLayer"><span class="ln"></span></ribbon-combo><ribbon-combo label="Linetype" value="ByLayer"><span class="ln"></span></ribbon-combo>`), 'launch') +
panel('Groups', 58, bt('group', 'Group', 34) + col(20, 1, st('g2') + st('g3') + st('g4', '', 'on'))) +
panel('Utilities', 81, bt('measure', 'Measure', 57, 'menu') + col(16, 2, st('u1') + st('u2') + st('u3'))) +
panel('Clipboard', 66, bt('paste', 'Paste', 42, 'menu') + col(16, 3, st('c1') + st('c2')), 'plain') +
panel('View', 52, bt('base', 'Base', 50, 'menu'), 'launch'));

element('doc-tab', `:host{display:block;flex:none;width:var(--w);margin-right:-4px}
button{width:100%;height:18px;display:flex;align-items:center;justify-content:space-between;padding:0 13px;background:#5a5a5a;color:#b4b4b4;clip-path:polygon(0 100%,4px 90%,9px 14%,14px 0,calc(100% - 14px) 0,calc(100% - 9px) 14%,calc(100% - 4px) 90%,100% 100%)}
:host([on]) button{background:linear-gradient(#8a8a8a,#666);color:#fff;padding-left:12px}cad-icon{color:#3a3a3a}`,
(a, h) => `<button type="button" role="tab"><slot></slot>${h('closable') ? ic('tabx') : ''}</button>`);

element('doc-tabs', `:host{display:flex;align-items:flex-end;height:24px;background:#383838;border-bottom:3px solid #5f5f5f;padding-left:12px}
.add{width:20px;height:14px;margin:0 0 3px 6px;display:flex;align-items:center;justify-content:center;background:#565656;color:#ccc;border-radius:3px 7px 7px 7px}`,
`<doc-tab style="--w:108px">Start</doc-tab><doc-tab on closable style="--w:134px">A1.1 - Planta Térreo 2*</doc-tab><doc-tab closable style="--w:108px">A.1.1 - Térreo*</doc-tab><button class="add" type="button" aria-label="New drawing">${ic('plus')}</button>`);

element('palette-bar', `:host{display:flex;flex:1;align-items:center;justify-content:center;border:1px solid #333;background:linear-gradient(90deg,#8a8a8a,#666);color:#f0f0f0;font-size:11px;position:relative}
span{writing-mode:vertical-rl;transform:rotate(180deg);white-space:nowrap;line-height:14px}
:host::before{content:"";position:absolute;top:2px;left:4px;width:9px;height:2px;background:repeating-linear-gradient(90deg,#444 0 1px,#777 1px 2px)}`,
'<span><slot></slot></span>');

element('view-cube', ':host{display:block;width:110px;height:150px}svg{display:block;font-family:"Liberation Sans",Arial,sans-serif;font-weight:700}',
`<svg width="110" height="150" viewBox="0 0 110 150"><circle cx="55" cy="58" r="45" fill="none" stroke="#2b2b2b" stroke-width="10"/><g fill="#b0b0b0" font-size="17" text-anchor="middle"><text x="55" y="18">N</text><text x="8" y="64">W</text><text x="102" y="64">E</text><text x="55" y="112">S</text></g>
<path d="M33 36h43v43H33z" fill="#a8a8a8" stroke="#c0c0c0"/><path d="M42 45h26v26H42z" fill="#9a9ba2"/><text x="55" y="62" font-size="10" text-anchor="middle" fill="#3f4552">TOP</text>
<rect x="36" y="131" width="38" height="14" rx="3" fill="#83838f" stroke="#9a9aa6"/><text x="39" y="141" font-size="9" font-weight="400" fill="#d8d8e0">WCS</text><path d="M64 136h7l-3.500 4z" fill="#a5a5b5"/></svg>`);

element('nav-bar', `:host{display:flex;flex-direction:column;align-items:center;width:27px;height:178px;background:#464646;border:1px solid #555;border-radius:3px;color:#2c2c2c;padding:1px 2px}
button{display:flex}cad-icon.c{align-self:flex-end}hr{width:22px;margin:3px 0;border:0;border-top:1px solid #5c5c5c}.g{margin:5px 0 4px}`,
`<cad-icon class="c" name="n0"></cad-icon><button type="button" aria-label="Wheel" class="g">${ic('n1')}</button>${ic('arrowsm')}<hr><button type="button" aria-label="Pan">${ic('n2')}</button><button type="button" aria-label="Zoom" style="margin:2px 0 3px">${ic('n3')}</button>${ic('arrowsm')}<button type="button" aria-label="Orbit" class="g">${ic('n4')}</button>${ic('arrowsm')}<hr><button type="button" aria-label="Motion">${ic('n5')}</button><cad-icon class="c" name="n0" style="margin-top:auto"></cad-icon>`);

const lines = (start, step, count) => Array.from({ length: count }, (_, i) => Math.round(start + i * step) + 0.5);
const gridPath = (x, y, step, count) => lines(x, step, count).map(v => `M${v} 0v3000`).join('') + lines(y, step, count).map(v => `M0 ${v}h6000`).join('');
element('drawing-area', `:host{display:block;position:relative;flex:1;min-height:0;overflow:hidden;background:#000}
.grid{position:absolute;inset:0}.label{position:absolute;left:2px;top:5px;color:#e8e8e8;line-height:13px;white-space:nowrap}
.vp{position:absolute;right:7px;top:8px;display:flex;gap:7px;color:#eee}.vp button{display:flex}
view-cube{position:absolute;right:13px;top:30px}nav-bar{position:absolute;right:3px;top:196px}
::slotted(*){position:absolute;left:521px;top:52px}`,
`<svg class="grid" width="100%" height="100%" aria-hidden="true"><path d="${gridPath(12, 0, 22.52, 200)}" stroke="#0c0e13"/><path d="${gridPath(57, 90, 112.6, 50)}" stroke="#1a1e2a"/><path d="M395.500 0v428" stroke="#0c450c"/><path d="M395 428.500h5000" stroke="#4a0e0e"/>
<path d="M522 154.500h-6.500V276" stroke="#8f8f00" fill="none" stroke-width="2"/><rect x="512" y="275" width="30" height="135" rx="3" fill="#7d7d7d"/>
<path d="M395.500 387v37M400 428h38" stroke="#ccc" stroke-width="1.500" fill="none"/><path d="M392 424h8v8h-8z" fill="none" stroke="#ddd" stroke-width="1.500"/><path d="M397 372l5 5 5-5M402 377v6M441 416l10 10M451 416l-10 10" fill="none" stroke="#ddd" stroke-width="1.200"/></svg>
<span class="label">[−][Top][2D Wireframe]</span><div class="vp"><button type="button" aria-label="Minimize view">${ic('vmin')}</button><button type="button" aria-label="Restore view">${ic('vrest')}</button><button type="button" aria-label="Close view">${ic('vclose')}</button></div>
<view-cube></view-cube><nav-bar></nav-bar><slot></slot>`);

element('command-line', `:host{display:flex;height:45px;border-top:2px solid #666;font-family:"DejaVu Sans Mono","Liberation Mono",monospace;color:#1d2733}
.grip{width:18px;background:#555;color:#eee;display:flex;flex-direction:column;align-items:center;gap:6px;padding-top:4px}.grip i{width:14px;height:3px;background:repeating-linear-gradient(90deg,#999 0 2px,#555 2px 3px)}.grip button{display:flex}
.log{flex:1;display:flex;flex-direction:column}p{margin:0;height:25px;padding:10px 2px 0;line-height:12px;background:#c8c8c8;border-bottom:1px solid #aaa}
label{flex:1;display:flex;align-items:center;gap:3px;background:#fff;padding-left:4px;color:#666}input{flex:1;height:18px;line-height:18px;color:#1d3540;font-family:"Liberation Mono",monospace}`,
`<div class="grip"><i></i><button type="button" aria-label="Close">${ic('closeb')}</button><button type="button" aria-label="Customize">${ic('wrench')}</button></div><div class="log"><p>Command:</p><label>${ic('prompt')}${ic('arrowsm')}<input aria-label="Command" value="_ETRANSMIT"></label></div>`);

const cell = (n, on) => `<button type="button" ${on ? 'class="on"' : ''} aria-label="${n}">${ic(n)}</button>`;
const drop = (c = '') => `<button class="d ${c}" type="button" aria-label="Options">${ic('arrowsm')}</button>`;
element('status-bar', `:host{display:flex;height:24px;background:#373737;color:#ddd;border-top:1px solid #555}
.layouts{display:flex;padding-left:5px;flex:1}.layouts button{height:16px;padding:0 13px;margin-right:-7px;background:#4b4b4b;color:#b5b5b5;line-height:14px;clip-path:polygon(0 0,100% 0,calc(100% - 4px) 12%,calc(100% - 8px) 85%,calc(100% - 12px) 100%,12px 100%,8px 85%,4px 12%)}
.layouts .on{background:linear-gradient(#666,#858585);color:#fff;font-weight:700}.layouts .p{margin-left:5px;height:14px;display:flex;align-items:center;padding:0 9px}
.set{display:flex;align-items:center;background:#4f4f4f;border:1px solid #656565}
.set button{width:20px;height:20px;display:flex;align-items:center;justify-content:center}.set .d{width:13px}.set .n{width:9px}.set .on{background:#5b8bc2;color:#fff}.set .t{width:17px}
hr{width:2px;height:22px;margin:0 1px;border:0;background:#6b6b6b}.set .m{width:37px;color:#fff;font-weight:500}`,
`<div class="layouts"><button class="on" type="button">Model</button><button type="button">Layout1</button><button type="button">Layout2</button><button class="p" type="button" aria-label="New layout">${ic('plus')}</button></div>
<div class="set"><button class="m" type="button">MODEL</button><hr>${cell('s1', 1)}${cell('s2')}${drop()}<hr>${cell('s3', 1)}${cell('s4')}${drop()}${cell('s5')}${drop()}${cell('s6', 1)}${cell('s7', 1)}${drop()}${cell('s8', 1)}<hr>${cell('s9', 1)}${cell('s10')}${cell('s11')}<button class="t" type="button">1:1</button>${drop('n')}<hr>${cell('gear')}${drop()}<hr>${cell('s12', 1)}<hr>${cell('s13')}<hr>${cell('s14')}${cell('s15')}<hr>${cell('s16')}${cell('s17')}</div>`);

/* One line of the files tree; depth is set by --in */
element('tree-row', `:host{display:flex;align-items:center;height:17px;padding-left:var(--in);white-space:nowrap}
cad-icon{margin-right:2px}label{display:flex;align-items:center;line-height:13px}.sel{background:#0078d7;color:#fff;outline:1px dotted #d98a3a;padding:0 1px;margin-left:1px}
input{appearance:none;width:9px;height:9px;border:1px solid #444;background:#fff;margin:0 3px 0 2px;display:grid;place-items:center}input:checked::before{content:"";width:5px;height:2px;border:solid #000;border-width:0 0 1px 1px;transform:rotate(-45deg);margin-top:-2px}`,
(a, h) => `${ic(a('mark'))}${ic(a('icon'))}<label>${h('check') ? '<input type="checkbox" checked>' : ''}<span class="${h('sel') ? 'sel' : ''}"><slot></slot></span></label>`);

element('red-mark', ':host{position:absolute;border:4px solid #f00;pointer-events:none;z-index:2}', '');
element('red-step', ':host{position:absolute;z-index:3;font:700 39px/40px "Liberation Sans",Arial,sans-serif;color:#f00;pointer-events:none}', '<slot></slot>');

element('transmittal-dialog', `:host{display:block;width:503px;background:#f0f0f0;color:#111;font:9px/12px "Liberation Sans",Arial,sans-serif;box-shadow:0 0 0 1px #555}
header{height:25px;background:#fff;display:flex;align-items:center;gap:3px;padding:0 8px 1px 7px;font:10px Roboto,sans-serif}header button{margin-left:auto;display:flex;color:#222}
.who{height:31px;display:flex;align-items:flex-end;padding:0 7px 1px 6px}.who span{margin:0 0 2px 11px}.who cad-icon:nth-of-type(2){margin-left:auto}.who .u{width:193px}
.cols{display:grid;grid-template-columns:277px 179px;column-gap:10px;margin-left:29px}
.tabs{display:flex;align-items:flex-end;height:19px}.tabs button{height:15px;line-height:12px;padding:0 4px;border:1px solid #dcdcdc;border-bottom:0}.tabs .on{background:#fff;height:18px;padding:0 3px 3px 6px;border-right:0}
.page{border:1px solid #dcdcdc;background:#fff;padding:1px 2px 1px 3px}.tree{height:214px;border:1px solid #828790;background:#fff;padding-top:1px}
.foot{display:flex;justify-content:space-between;align-items:center;height:20px;padding-right:3px}
.btn{border:1px solid #adadad;background:#e1e1e1;height:18px;line-height:15px}.foot .btn{width:76px;height:15px;line-height:13px}
.notes{display:block;margin:2px 0 8px}.area{height:61px;border:1px solid #7a7a7a;background:#fff;display:flex}.area textarea{flex:1;resize:none;outline:0}.sb{width:14px;background:#f0f0f0;display:flex;flex-direction:column;justify-content:space-between;align-items:center;padding:5px 0;color:#aaa}
fieldset{margin:0;border:1px solid #dcdcdc;padding:6px 9px 8px 11px;min-width:0}legend{padding:0 3px;margin-left:-7px;line-height:12px}
.setup{height:222px;margin-top:3px}.prev{height:102px;margin-top:11px}
.list{width:158px;height:103px;border:1px solid #828790;background:#fff;padding:1px}.sel{display:block;background:#0078d7;color:#fff;height:11px;line-height:11px;padding:0 2px}
.sd{display:block;margin:7px 0 3px}.desc{display:block;width:158px;height:45px;border:solid #696969;border-width:1px 0 0 1px;box-shadow:inset -1px -1px #fff;resize:none;background:#f0f0f0}
.ts{width:157px;margin-top:7px}
.acts{display:flex;padding:22px 9px 11px 30px}.acts .btn{width:61px}.acts .vr{width:93px;margin-right:auto}.acts .ok{border:2px solid #0078d7;line-height:13px;margin-right:12px}.acts .c{margin-right:12px}`,
`<header>${ic('logosm')}<span>Create Transmittal</span><button type="button" aria-label="Close">${ic('close')}</button></header>
<div class="who">${ic('folder')}<span>Current Drawing(s):</span>${ic('person')}<span class="u">Current user: Camila</span></div>
<div class="cols"><section><div class="tabs" role="tablist"><button class="on" type="button" role="tab">Files Tree</button><button type="button" role="tab">Files Table</button></div>
<div class="page"><div class="tree" role="tree"><tree-row mark="box" icon="tdraw" style="--in:8px">Current Drawing</tree-row><tree-row mark="box" icon="tdrawok" check style="--in:21px">A1.1 - Planta Térreo 2.dwg</tree-row><tree-row mark="box" icon="txref" sel style="--in:34px">External References</tree-row><tree-row mark="tee" icon="tfile" check style="--in:50px">x-planta-exist 2.dwg</tree-row><tree-row mark="elbow" icon="tfile" check style="--in:50px">x-planta-novo 2.dwg</tree-row></div>
<div class="foot"><span>Included 3 file(s), 104KB</span><button class="btn" type="button">Add&nbsp; File...</button></div></div>
<label class="notes" for="notes">Enter notes to include with this transmittal package:</label><div class="area"><textarea id="notes"></textarea><div class="sb">${ic('up')}${ic('down')}</div></div></section>
<section><fieldset class="setup"><legend>Select a transmittal setup</legend><div class="list" role="listbox" tabindex="0" aria-label="Transmittal setups"><span class="sel" role="option" aria-selected="true">Standard</span></div><label class="sd" for="desc">Setup description:</label><textarea class="desc" id="desc" readonly></textarea><button class="btn ts" type="button">Transmittal Setups...</button></fieldset><fieldset class="prev"><legend>Preview</legend></fieldset></section></div>
<div class="acts"><button class="btn vr" type="button">View Report</button><button class="btn ok" type="button">OK</button><button class="btn c" type="button">Cancel</button><button class="btn" type="button">Help</button></div>
<red-mark style="left:30px;top:56px;width:205px;height:126px"></red-mark><red-step style="left:208px;top:180px">4º</red-step><red-step style="left:329px;top:366px">5º</red-step><red-mark style="left:276px;top:406px;width:79px;height:39px"></red-mark>`);

element('cad-window', `:host{display:flex;flex-direction:column;height:100%;background:#fff;box-shadow:0 0 5px #999;padding-bottom:1px}
.frame{flex:1;min-height:0;display:flex;flex-direction:column;border:1px solid #0c0c0c;margin:0 1px;background:#5f5f5f}
main{flex:1;min-height:0;display:flex}.side{width:20px;flex:none;display:flex;flex-direction:column;gap:6px;padding:4px 2px 3px 0}.work{flex:1;min-width:0;display:flex;flex-direction:column}`,
`<title-bar></title-bar><div class="frame"><ribbon-tabs></ribbon-tabs><cad-ribbon></cad-ribbon><doc-tabs></doc-tabs>
<main><div class="side"><palette-bar>Layer Properties Manager</palette-bar><palette-bar>Properties</palette-bar><palette-bar>External References</palette-bar></div>
<div class="work"><drawing-area><transmittal-dialog role="dialog" aria-label="Create Transmittal"></transmittal-dialog></drawing-area><command-line></command-line></div></main><status-bar></status-bar></div>`);
</script>
</body>
</html>
